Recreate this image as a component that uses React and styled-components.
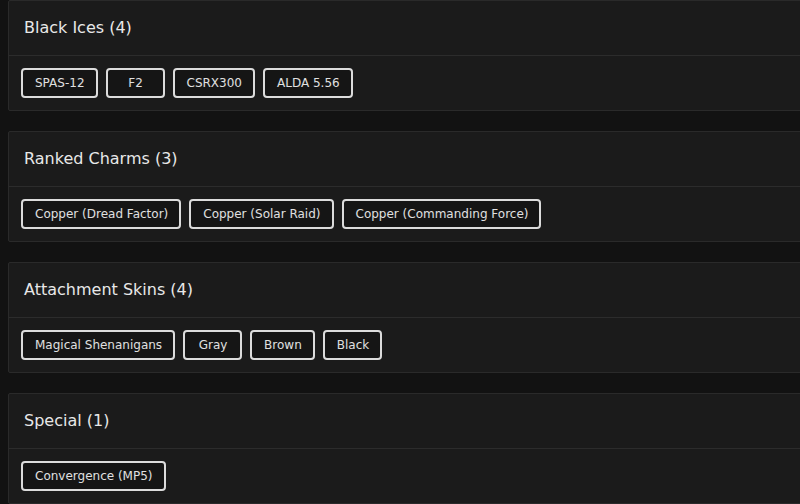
import React from 'react';
import styled, { createGlobalStyle } from 'styled-components';

const GlobalStyle = createGlobalStyle`
    html, body {
        margin: 0;
        padding: 0;
        background: #121212;
        overflow: hidden;
    }
    body {
        font-family: "DejaVu Sans", "Noto Sans", sans-serif;
        color: #e4e4e4;
    }
`

const Page = styled.div`
    display: flex;
    flex-direction: column;
    gap: 20px;
    padding-left: 8px;
    margin-right: -24px;
`
const Card = styled.section`
    background: #1b1b1b;
    border: 1px solid #2a2a2a;
    border-radius: 2px;
`
const Header = styled.div`
    box-sizing: border-box;
    height: 55px;
    display: flex;
    align-items: center;
    padding: 0 15px 1px;
    border-bottom: 1px solid #2c2c2c;
`
const Title = styled.h3`
    margin: 0;
    font-size: 16px;
    font-weight: 500;
    color: #e8e8e8;
`
const ChipRow = styled.div`
    display: flex;
    flex-wrap: wrap;
    gap: 8px;
    padding: 12px;
`
const Chip = styled.span`
    display: inline-flex;
    align-items: center;
    justify-content: center;
    min-width: 59px;
    height: 30px;
    box-sizing: border-box;
    padding: 0 11px 0 12px;
    border: 2px solid #dcdcdc;
    border-radius: 4px;
    background: #151515;
    font-size: 12px;
    color: #e0e0e0;
`

const groups = [
    { name: "Black Ices", items: ["SPAS-12", "F2", "CSRX300", "ALDA 5.56"] },
    { name: "Ranked Charms", items: ["Copper (Dread Factor)", "Copper (Solar Raid)", "Copper (Commanding Force)"] },
    { name: "Attachment Skins", items: ["Magical Shenanigans", "Gray", "Brown", "Black"] },
    { name: "Special", items: ["Convergence (MP5)"] },
]

export default function App() {
    return (
        <>
            <GlobalStyle />
            <Page>
                {groups.map(group => (
                    <Card key={group.name}>
                        <Header>
                            <Title>{group.name} ({group.items.length})</Title>
                        </Header>
                        <ChipRow>
                            {group.items.map(item => <Chip key={item}>{item}</Chip>)}
                        </ChipRow>
                    </Card>
                ))}
            </Page>
        </>
    )
}
